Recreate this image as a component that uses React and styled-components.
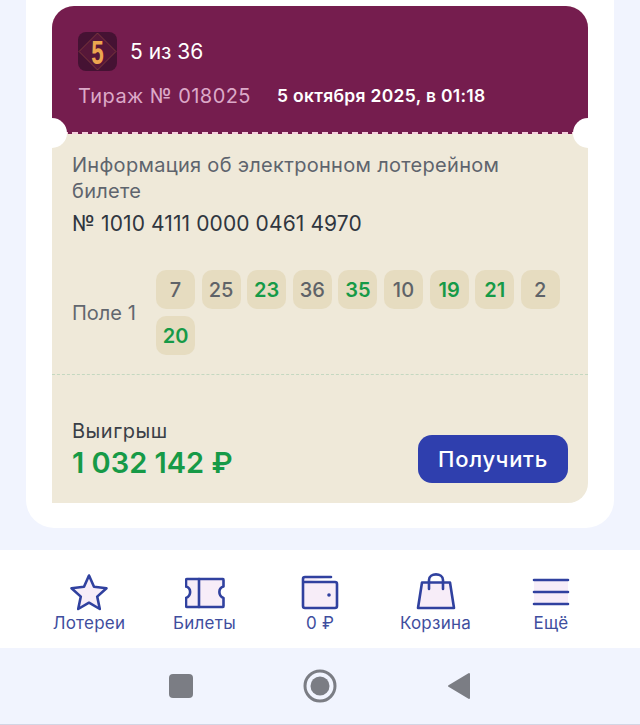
import React from 'react';
import styled, { createGlobalStyle } from 'styled-components';

const Global = createGlobalStyle`
  html, body {
    margin: 0;
    padding: 0;
    background: #f1f4fe;
  }
  * {
    box-sizing: border-box;
  }
`

const Page = styled.div`
  width: 640px;
  height: 725px;
  display: flex;
  flex-direction: column;
  font-family: Inter, "Noto Sans", sans-serif;
  background: #f1f4fe;
  overflow: hidden;
`

const Content = styled.main`
  padding: 0 26px 22px;
`

const Card = styled.section`
  background: #fff;
  border-radius: 0 0 28px 28px;
  padding: 6px 26px 25px;
`

const Ticket = styled.article`
  position: relative;
  background: #efe9d9;
  border-radius: 22px 22px 20px 0;
  overflow: hidden;
`

const Notch = styled.span`
  position: absolute;
  top: 112px;
  ${props => props.side}: -15px;
  width: 30px;
  height: 30px;
  border-radius: 50%;
  background: #fff;
`

const Head = styled.header`
  height: 128px;
  background: #751d4e;
  padding: 26px 26px 0;
  border-bottom: 2px dashed #f3cfdc;
`

const Game = styled.div`
  display: flex;
  align-items: center;
  gap: 13px;
  color: #fff;
  font-size: 21px;
  line-height: 39px;
`

const Draw = styled.div`
  display: flex;
  align-items: center;
  gap: 26px;
  margin-top: 11px;
`

const DrawNo = styled.span`
  color: #dca9c8;
  font-size: 20px;
  line-height: 28px;
  letter-spacing: 0.45px;
`

const DrawDate = styled.span`
  color: #fff;
  font-size: 17.5px;
  font-weight: 600;
  line-height: 28px;
  letter-spacing: 0.3px;
`

const Info = styled.div`
  padding: 18px 20px 0;
`

const InfoTitle = styled.h2`
  margin: 0;
  max-width: 440px;
  color: #5e646d;
  font-size: 20px;
  font-weight: 400;
  line-height: 26px;
  letter-spacing: 0.3px;
`

const InfoNumber = styled.p`
  margin: 7px 0 0;
  color: #30363f;
  font-size: 21px;
  line-height: 26px;
  letter-spacing: 0.1px;
`

const Field = styled.div`
  display: flex;
  align-items: center;
  margin-top: 33px;
`

const FieldName = styled.span`
  flex: 0 0 84px;
  color: #62676e;
  font-size: 20px;
`

const Balls = styled.div`
  display: flex;
  flex-wrap: wrap;
  gap: 7px 6.6px;
`

const Ball = styled.span`
  width: 39px;
  height: 39px;
  display: flex;
  align-items: center;
  justify-content: center;
  border-radius: 10px;
  background: #e6dcc0;
  color: ${props => (props.$hit ? '#169a47' : '#5f6368')};
  font-size: 20px;
  font-weight: ${props => (props.$hit ? 600 : 500)};
`

const Divider = styled.hr`
  margin: 19px 0 0;
  border: 0;
  border-top: 1px dashed #c4d8c0;
`

const Prize = styled.div`
  display: flex;
  align-items: flex-end;
  justify-content: space-between;
  padding: 43px 20px 20px;
`

const PrizeText = styled.div`
  margin-bottom: 2px;
`

const PrizeLabel = styled.div`
  color: #3a3f47;
  font-size: 20px;
  line-height: 26px;
  letter-spacing: 0.5px;
`

const PrizeSum = styled.div`
  color: #169a47;
  font-size: 29px;
  font-weight: 600;
  line-height: 36px;
  margin-top: 1px;
`

const GetButton = styled.button`
  width: 150px;
  height: 48px;
  border: 0;
  border-radius: 14px;
  background: #2f3fae;
  color: #fff;
  font: 500 22px Inter, "Noto Sans", sans-serif;
  letter-spacing: 0.7px;
`

const Nav = styled.nav`
  height: 98px;
  background: #fff;
  display: grid;
  grid-template-columns: repeat(5, 115.5px);
  justify-content: center;
`

const NavItem = styled.div`
  display: flex;
  flex-direction: column;
  align-items: center;
  padding-top: 23px;
  color: #3f4e9e;
  font-size: 17px;
  line-height: 24px;
  letter-spacing: 0.25px;
  svg {
    display: block;
    width: 40px;
    height: 40px;
    margin-bottom: -2px;
  }
`

const SystemBar = styled.div`
  flex: 1;
  display: flex;
  align-items: center;
  justify-content: center;
  gap: 110px;
  padding-bottom: 1px;
  border-bottom: 1px solid #d3d5e4;
`

const Logo = () => (
  <svg width="39" height="39" viewBox="0 0 39 39">
    <rect width="39" height="39" rx="8" fill="#451233" />
    <path d="M19.500 1 L38 19.500 L19.500 38 L1 19.500 Z" fill="#561739" stroke="#9c5340" strokeWidth="0.6" />
    <text transform="translate(19.500 31.500) scale(0.66 1)" textAnchor="middle" fontFamily="Liberation Sans, sans-serif" fontWeight="700" fontSize="34" fill="#eda64f">5</text>
  </svg>
)

const stroke = { fill: '#f7edf8', stroke: '#30419f', strokeWidth: 2.6, strokeLinejoin: 'round', strokeLinecap: 'round' }

const StarIcon = () => (
  <svg viewBox="0 0 40 40">
    <path {...stroke} d="M20 2.500 L25 13.800 L37.500 15.200 L28.200 23.600 L30.800 36 L20 29.700 L9.200 36 L11.800 23.600 L2.500 15.200 L15 13.800 Z" />
  </svg>
)

const TicketIcon = () => (
  <svg viewBox="0 0 40 40">
    <path {...stroke} d="M2 6 H38 Q38.500 6 38.500 7 V13.500 C33 15 33 23 38.500 25 V33 Q38.500 34 38 34 H2 Q1 34 1 33 V25 C6.500 23 6.500 15 1 13.500 V7 Q1 6 2 6 Z" />
    <path {...stroke} d="M14 6 V34" />
  </svg>
)

const WalletIcon = () => (
  <svg viewBox="0 0 40 40">
    <path {...stroke} d="M5 9 H35 Q37 9 37 11 V33 Q37 35 35 35 H5 Q3 35 3 33 V6 Q3 4 5 4 H31 " />
    <circle cx="29" cy="22" r="1.800" fill="#30419f" />
  </svg>
)

const BagIcon = () => (
  <svg viewBox="0 0 40 40">
    <path {...stroke} d="M6 9.500 H34 L38 35 H2 Z" />
    <path {...stroke} fill="none" d="M13 16 V7 C13 -0.500 27 -0.500 27 7 V16" />
  </svg>
)

const MenuIcon = () => (
  <svg viewBox="0 0 40 40">
    <rect x="3" y="7" width="34" height="23" fill="#f7edf8" />
    <path {...stroke} d="M3 7 H37 M3 19 H37 M3 31 H37" />
  </svg>
)

const SquareKey = () => (
  <svg width="24" height="24" viewBox="0 0 24 24">
    <rect width="24" height="24" rx="4" fill="#7b7d84" />
  </svg>
)

const CircleKey = () => (
  <svg width="34" height="34" viewBox="0 0 34 34">
    <circle cx="17" cy="17" r="15" fill="none" stroke="#7b7d84" strokeWidth="3" />
    <circle cx="17" cy="17" r="9.500" fill="#7b7d84" />
  </svg>
)

const BackKey = () => (
  <svg width="24" height="28" viewBox="0 0 24 28">
    <path d="M22 2 V26 L2 14 Z" fill="#7b7d84" stroke="#7b7d84" strokeWidth="2" strokeLinejoin="round" />
  </svg>
)

const numbers = [
  [7], [25], [23, true], [36], [35, true], [10], [19, true], [21, true], [2], [20, true],
]

const navItems = [
  ['Лотереи', StarIcon],
  ['Билеты', TicketIcon],
  ['0 ₽', WalletIcon],
  ['Корзина', BagIcon],
  ['Ещё', MenuIcon],
]

const App = () => {
  return (
    <Page>
      <Global />
      <Content>
        <Card>
          <Ticket>
            <Head>
              <Game>
                <Logo />
                5 из 36
              </Game>
              <Draw>
                <DrawNo>Тираж № 018025</DrawNo>
                <DrawDate>5 октября 2025, в 01:18</DrawDate>
              </Draw>
            </Head>
            <Notch side="left" />
            <Notch side="right" />
            <Info>
              <InfoTitle>Информация об электронном лотерейном билете</InfoTitle>
              <InfoNumber>№ 1010 4111 0000 0461 4970</InfoNumber>
              <Field>
                <FieldName>Поле 1</FieldName>
                <Balls>
                  {numbers.map(([n, hit]) => (
                    <Ball key={n} $hit={hit}>{n}</Ball>
                  ))}
                </Balls>
              </Field>
            </Info>
            <Divider />
            <Prize>
              <PrizeText>
                <PrizeLabel>Выигрыш</PrizeLabel>
                <PrizeSum>1 032 142 ₽</PrizeSum>
              </PrizeText>
              <GetButton>Получить</GetButton>
            </Prize>
          </Ticket>
        </Card>
      </Content>
      <Nav>
        {navItems.map(([label, Icon]) => (
          <NavItem key={label}>
            <Icon />
            {label}
          </NavItem>
        ))}
      </Nav>
      <SystemBar>
        <SquareKey />
        <CircleKey />
        <BackKey />
      </SystemBar>
    </Page>
  )
}

export default App;
